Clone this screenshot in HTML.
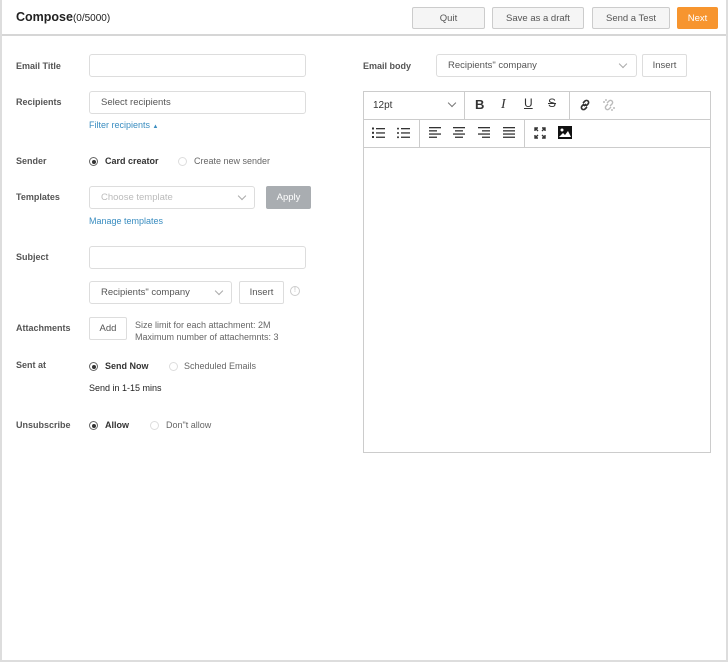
<!DOCTYPE html>
<html><head><style>
*{box-sizing:border-box;margin:0;padding:0}
body{width:728px;height:662px;background:#fff;font-family:"Liberation Sans",sans-serif;font-size:9.5px;color:#333;position:relative;overflow:hidden}
.frame{position:absolute;left:0;top:0;width:728px;height:662px;border:2px solid #ddd;border-top:none}
.a{position:absolute}
.hdr{position:absolute;left:0;top:0;width:728px;height:36px;border-bottom:2px solid #d6d6d6;background:#fff}
.btn,.wb{position:absolute;display:flex;align-items:center;justify-content:center}
.btn{height:22px;border:1px solid #ccc;border-radius:2px;background:#f5f5f5;font-size:9.5px;color:#555}
.lbl{position:absolute;left:16px;font-weight:bold;color:#555;font-size:9px}
.inp{position:absolute;border:1px solid #ddd;border-radius:3px;background:#fff;height:23px;font-size:9.5px;color:#555;display:flex;align-items:center;padding-left:11px}
.wb{border:1px solid #ddd;border-radius:2px;background:#fff;height:23px;font-size:9.5px;color:#555}
.rad{position:absolute;width:9px;height:9px;border:1px solid #666;border-radius:50%}
.rad.on::after{content:"";position:absolute;left:1.5px;top:1.5px;width:4px;height:4px;border-radius:50%;background:#333}
.rad.off{border-color:#ddd}
.chev{position:absolute;width:6px;height:6px;border-right:1px solid #aaa;border-bottom:1px solid #aaa;transform:rotate(45deg)}
.blue{position:absolute;color:#3a8dc0;font-size:9px}
</style></head><body>
<div class="hdr">
<div class="a" style="left:16px;top:10px;font-size:12.5px;font-weight:bold;color:#222">Compose<span style="font-weight:normal;font-size:10px">(0/5000)</span></div>
<div class="btn" style="left:412px;top:7px;width:73px">Quit</div>
<div class="btn" style="left:492px;top:7px;width:92px">Save as a draft</div>
<div class="btn" style="left:592px;top:7px;width:78px">Send a Test</div>
<div class="btn" style="left:677px;top:7px;width:41px;background:#f7952f;border-color:#f7952f;color:#fff">Next</div>
</div>
<div class="frame"></div>

<div class="lbl" style="top:61px">Email Title</div>
<div class="inp" style="left:89px;top:54px;width:217px"></div>
<div class="lbl" style="top:97px">Recipients</div>
<div class="inp" style="left:89px;top:91px;width:217px">Select recipients</div>
<div class="blue" style="left:89px;top:120px">Filter recipients <span style="font-size:6px">▲</span></div>

<div class="lbl" style="top:156px">Sender</div>
<div class="rad on" style="left:89px;top:157px"></div>
<div class="a" style="left:105px;top:156px;font-weight:bold;font-size:9px">Card creator</div>
<div class="rad off" style="left:178px;top:157px"></div>
<div class="a" style="left:194px;top:156px;color:#666;font-size:9px">Create new sender</div>

<div class="lbl" style="top:192px">Templates</div>
<div class="inp" style="left:89px;top:186px;width:166px;color:#bbb">Choose template</div>
<div class="chev" style="left:239px;top:193px"></div>
<div class="btn" style="left:266px;top:186px;width:45px;height:23px;background:#a9adb1;border-color:#a9adb1;color:#fff">Apply</div>
<div class="blue" style="left:89px;top:216px">Manage templates</div>

<div class="lbl" style="top:252px">Subject</div>
<div class="inp" style="left:89px;top:246px;width:217px"></div>
<div class="inp" style="left:89px;top:281px;width:143px">Recipients" company</div>
<div class="chev" style="left:216px;top:288px"></div>
<div class="wb" style="left:239px;top:281px;width:45px">Insert</div>
<div class="a" style="left:290px;top:286px;width:10px;height:10px;border:1px solid #ccc;border-radius:50%;font-size:7px;color:#bbb;text-align:center;line-height:8px">!</div>

<div class="lbl" style="top:323px">Attachments</div>
<div class="wb" style="left:89px;top:317px;width:38px">Add</div>
<div class="a" style="left:135px;top:319px;color:#666;font-size:9px;line-height:12px">Size limit for each attachment: 2M<br>Maximum number of attachemnts: 3</div>

<div class="lbl" style="top:360px">Sent at</div>
<div class="rad on" style="left:89px;top:362px"></div>
<div class="a" style="left:105px;top:361px;font-weight:bold;font-size:9px">Send Now</div>
<div class="rad off" style="left:169px;top:362px"></div>
<div class="a" style="left:184px;top:361px;color:#666;font-size:9px">Scheduled Emails</div>
<div class="a" style="left:89px;top:383px;font-size:9px;color:#222">Send in 1-15 mins</div>

<div class="lbl" style="top:420px">Unsubscribe</div>
<div class="rad on" style="left:89px;top:421px"></div>
<div class="a" style="left:105px;top:420px;font-weight:bold;font-size:9px">Allow</div>
<div class="rad off" style="left:150px;top:421px"></div>
<div class="a" style="left:166px;top:420px;color:#666;font-size:9px">Don"t allow</div>

<div class="lbl" style="left:363px;top:61px">Email body</div>
<div class="inp" style="left:436px;top:54px;width:201px">Recipients" company</div>
<div class="chev" style="left:620px;top:61px"></div>
<div class="wb" style="left:642px;top:54px;width:45px">Insert</div>

<div class="a" style="left:363px;top:91px;width:348px;height:362px;border:1px solid #ccc"></div>
<div class="a" style="left:363px;top:119px;width:348px;height:1px;background:#ccc"></div>
<div class="a" style="left:363px;top:147px;width:348px;height:1px;background:#ccc"></div>
<div class="a" style="left:464px;top:92px;width:1px;height:27px;background:#ccc"></div>
<div class="a" style="left:569px;top:92px;width:1px;height:27px;background:#ccc"></div>
<div class="a" style="left:419px;top:120px;width:1px;height:27px;background:#ccc"></div>
<div class="a" style="left:524px;top:120px;width:1px;height:27px;background:#ccc"></div>
<div class="a" style="left:373px;top:100px;font-size:10px;color:#333">12pt</div>
<div class="chev" style="left:449px;top:100px;border-color:#777"></div>
<div class="a" style="left:475px;top:97px;font-weight:bold;font-size:13px">B</div>
<div class="a" style="left:501px;top:97px;font-style:italic;font-family:'Liberation Serif',serif;font-size:14px">I</div>
<div class="a" style="left:524px;top:96px;text-decoration:underline;font-size:12px">U</div>
<div class="a" style="left:548px;top:96px;text-decoration:line-through;font-size:12px">S</div>
<svg class="a" style="left:578px;top:98px" width="14" height="14" viewBox="0 0 14 14" fill="none" stroke="#333" stroke-width="1.6"><path d="M6 8l2-2M5 5l2-2a2 2 0 013 3l-2 2M9 9l-2 2a2 2 0 01-3-3l2-2"/></svg>
<svg class="a" style="left:602px;top:98px" width="14" height="14" viewBox="0 0 14 14" fill="none" stroke="#bbb" stroke-width="1.4"><path d="M5 5l2-2a2 2 0 013 3l-2 2M9 9l-2 2a2 2 0 01-3-3l2-2M1 4h2M4 1v2M13 10h-2M10 13v-2"/></svg>
<svg class="a" style="left:372px;top:127px" width="13" height="12" viewBox="0 0 13 12" fill="#333"><rect x="4" y="1" width="9" height="1.3"/><rect x="4" y="5.3" width="9" height="1.3"/><rect x="4" y="9.6" width="9" height="1.3"/><rect x="0" y="0.5" width="2" height="2"/><rect x="0" y="4.8" width="2" height="2"/><rect x="0" y="9" width="2" height="2"/></svg>
<svg class="a" style="left:397px;top:127px" width="13" height="12" viewBox="0 0 13 12" fill="#333"><rect x="4" y="1" width="9" height="1.3"/><rect x="4" y="5.3" width="9" height="1.3"/><rect x="4" y="9.6" width="9" height="1.3"/><circle cx="1" cy="1.6" r="1"/><circle cx="1" cy="6" r="1"/><circle cx="1" cy="10.2" r="1"/></svg>
<svg class="a" style="left:429px;top:127px" width="12" height="11" viewBox="0 0 12 11" fill="#333"><rect y="0" width="12" height="1.3"/><rect y="3.2" width="8" height="1.3"/><rect y="6.4" width="12" height="1.3"/><rect y="9.6" width="8" height="1.3"/></svg>
<svg class="a" style="left:453px;top:127px" width="12" height="11" viewBox="0 0 12 11" fill="#333"><rect y="0" width="12" height="1.3"/><rect x="2" y="3.2" width="8" height="1.3"/><rect y="6.4" width="12" height="1.3"/><rect x="2" y="9.6" width="8" height="1.3"/></svg>
<svg class="a" style="left:478px;top:127px" width="12" height="11" viewBox="0 0 12 11" fill="#333"><rect y="0" width="12" height="1.3"/><rect x="4" y="3.2" width="8" height="1.3"/><rect y="6.4" width="12" height="1.3"/><rect x="4" y="9.6" width="8" height="1.3"/></svg>
<svg class="a" style="left:503px;top:127px" width="12" height="11" viewBox="0 0 12 11" fill="#333"><rect y="0" width="12" height="1.3"/><rect y="3.2" width="12" height="1.3"/><rect y="6.4" width="12" height="1.3"/><rect y="9.6" width="12" height="1.3"/></svg>
<svg class="a" style="left:534px;top:127px" width="12" height="12" viewBox="0 0 12 12" fill="none" stroke="#333" stroke-width="1.4"><path d="M1 4V1h3M1 1l3 3M8 1h3v3M11 1L8 4M1 8v3h3M1 11l3-3M11 8v3H8M11 11L8 8"/></svg>
<svg class="a" style="left:558px;top:126px" width="14" height="13" viewBox="0 0 14 13"><rect width="14" height="13" fill="#111"/><circle cx="4" cy="4" r="1.5" fill="#fff"/><path d="M1 11l4-4 2 2 3-4 3 6z" fill="#fff"/></svg>
</body></html>
